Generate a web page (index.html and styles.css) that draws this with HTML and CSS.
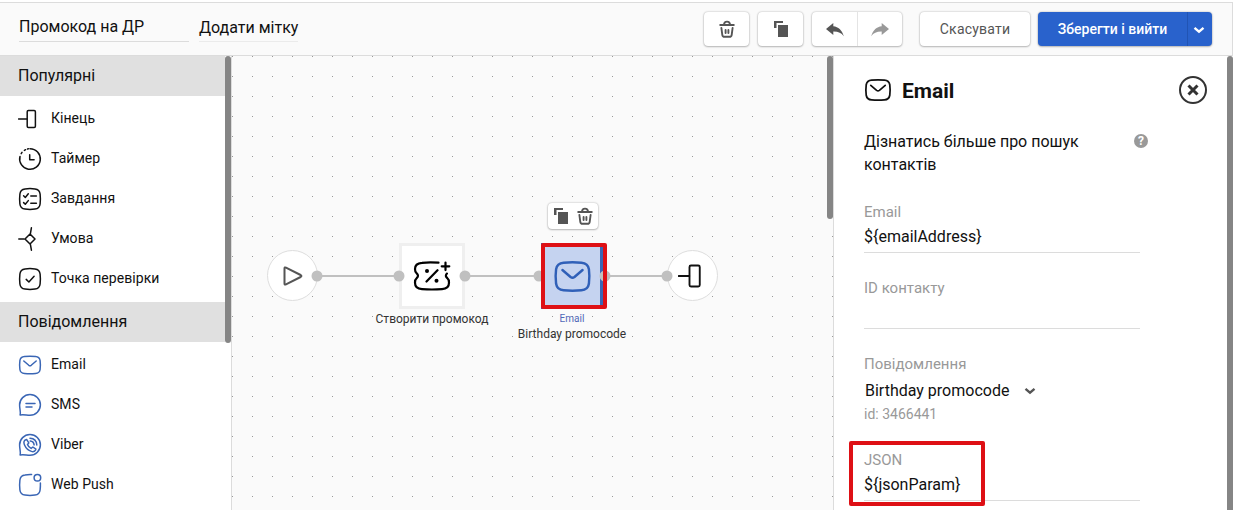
FILE: index.html
```html
<!DOCTYPE html>
<html lang="uk">
<head>
    <meta charset="UTF-8">
    <meta name="viewport" content="width=device-width, initial-scale=1.0">
    <title>Промокод на ДР</title>
    <link rel="stylesheet" href="styles.css">
</head>
<body>

<!-- Icons -->
<svg class="sprite">
    <symbol id="i-end" viewBox="0 0 24 24"><path d="M0.5 12H9"/><rect x="9.2" y="3.6" width="8.2" height="16.8" rx="1.2"/></symbol>
    <symbol id="i-timer" viewBox="0 0 24 24"><path d="M12 1.7a10.3 10.3 0 1 1-10 7.8"/><path d="M3.2 6.6l.8-1.2M6.4 3.4l1.2-.7M9.6 2l.8-.2"/><path d="M11.700 7.800v4.900h4.400"/></symbol>
    <symbol id="i-task" viewBox="0 0 24 24"><path d="M7 1.900q5-.6 10 0 4.600.5 5.100 5.100.6 5 0 10-.5 4.600-5.100 5.100-5 .6-10 0-4.600-.5-5.100-5.100-.6-5 0-10 .5-4.600 5.100-5.100z"/><path d="M5.600 8.800l1.700 1.700 3-3.700M12.800 9H18.400M5.600 15.600l1.700 1.700 3-3.700M12.800 16.200h5.600"/></symbol>
    <symbol id="i-cond" viewBox="0 0 24 24"><path d="M12 7l5 5-5 5-5-5zM.8 12H6M12.400 6.600l1-5.800M12.400 17.400l1 5.800"/></symbol>
    <symbol id="i-check" viewBox="0 0 24 24"><path d="M7 1.900q5-.6 10 0 4.600.5 5.100 5.100.6 5 0 10-.5 4.600-5.100 5.100-5 .6-10 0-4.600-.5-5.100-5.100-.6-5 0-10 .5-4.600 5.100-5.100z"/><path d="M8.200 12.400l2.700 2.600 5.200-5.800"/></symbol>
    <symbol id="i-mail" viewBox="0 0 24 20"><path d="M6.500 1.500q5.500-.5 11 0 4 .3 4.600 4 .6 4.500 0 9-.6 3.700-4.600 4-5.500.5-11 0-4-.3-4.600-4-.6-4.500 0-9 .6-3.700 4.600-4z"/><path d="M5.800 6l5 4.300q1.200.9 2.400 0l5-4.300"/></symbol>
    <symbol id="i-sms" viewBox="0 0 24 24"><path d="M1.600 12A10.400 10.400 0 1 1 12 22.300c-3.800 0-5.500-.8-9.900-.3.900-2.600-.5-5.600-.5-10z"/><path d="M8 10.400h9M8 14h6"/></symbol>
    <symbol id="i-viber" viewBox="0 0 24 24"><path d="M1.600 12A10.400 10.400 0 1 1 12 22.300c-3.800 0-5.500-.8-9.900-.3.900-2.600-.5-5.600-.5-10z"/><path d="M8.600 6.400c-2.600.6-3.300 2.700-2.200 5.300 1.400 3.300 3.800 5.700 7 6.700 2.300.7 4.100-.3 4.500-2.300l-3-2.100-1.800 1.400c-1.800-.9-3-2.300-3.600-4l1.300-1.500z"/><path d="M12 5.200c4 .2 6.600 2.900 6.800 6.800M12.200 8c2.400.2 3.700 1.600 3.900 3.900"/></symbol>
    <symbol id="i-push" viewBox="0 0 24 24"><path d="M13.600 1.600Q10 1.500 7 1.900q-4.600.5-5.100 5.100-.6 5 0 10 .5 4.600 5.100 5.100 5 .6 10 0 4.600-.5 5.100-5.100.4-3.500.3-7"/><circle cx="19.400" cy="4.700" r="3.300"/></symbol>
    <symbol id="i-promo" viewBox="0 0 38 30"><path d="M25.500 1.700Q16 1.200 9 1.800 2 2.200 2 8c0 2 .2 3.200 1.500 4.200q3 2.600 0 5.200C2.200 18.400 2 19.700 2 21.700q0 6 7 6.400 10 .8 20 0 7-.4 7-6.400c0-2-.2-3.300-1.500-4.300q-2.900-2.400-.6-4.800M32.500 1.500v7.600M28.700 5.300h7.600M24.500 9.200L13.500 20.500"/><circle class="solid" cx="14" cy="10" r="2"/><circle class="solid" cx="23.500" cy="19.800" r="2"/></symbol>
    <symbol id="i-trash" viewBox="0 0 16 18"><path d="M1.200 5h13.600M5 4.600C5.200.6 10.800.6 11 4.600M2.400 8l.9 6.800q.3 2 2.200 2h5q1.900 0 2.200-2L13.600 8M6.600 10v3M9.400 10v3"/></symbol>
    <symbol id="i-copy" viewBox="0 0 14 16"><path class="solid" d="M0 0h9v2H2.500v5H0zM4 4h10v12H4z"/></symbol>
    <symbol id="i-undo" viewBox="0 0 18 14"><path class="solid" d="M0 6L7.300 0v3.300c5 .6 8.600 3.600 10.500 10-2.400-3.300-5.500-4.800-10.500-4.700V12z"/></symbol>
    <symbol id="i-down" viewBox="0 0 12 8"><path d="M1.500 1.800L6 5.600l4.500-3.800"/></symbol>
</svg>

<div class="editor">
    <header class="topbar">
        <div class="title">Промокод на ДР</div>
        <div class="tag">Додати мітку</div>
        <div class="tools">
            <button class="btn icon-btn"><svg class="trash"><use href="#i-trash"/></svg></button>
            <button class="btn icon-btn"><svg class="copy"><use href="#i-copy"/></svg></button>
            <div class="btn history">
                <button><svg class="undo"><use href="#i-undo"/></svg></button>
                <button class="disabled"><svg class="undo redo"><use href="#i-undo"/></svg></button>
            </div>
            <button class="btn cancel">Скасувати</button>
            <div class="btn save">
                <button class="save-main">Зберегти і вийти</button>
                <button class="save-more"><svg class="down"><use href="#i-down"/></svg></button>
            </div>
        </div>
    </header>

    <div class="main">
        <aside class="sidebar">
            <div class="blocks">
                <h2>Популярні</h2>
                <ul>
                    <li><svg><use href="#i-end"/></svg>Кінець</li>
                    <li><svg><use href="#i-timer"/></svg>Таймер</li>
                    <li><svg><use href="#i-task"/></svg>Завдання</li>
                    <li><svg><use href="#i-cond"/></svg>Умова</li>
                    <li><svg><use href="#i-check"/></svg>Точка перевірки</li>
                </ul>
                <h2>Повідомлення</h2>
                <ul class="messages">
                    <li><svg><use href="#i-mail"/></svg>Email</li>
                    <li><svg><use href="#i-sms"/></svg>SMS</li>
                    <li><svg><use href="#i-viber"/></svg>Viber</li>
                    <li><svg><use href="#i-push"/></svg>Web Push</li>
                </ul>
            </div>
            <div class="scroll scroll-side"></div>
        </aside>

        <section class="canvas">
            <svg class="links">
                <path d="M85 220H167M233 220H307M373 220H435"/>
            </svg>
            <div class="node circle start">
                <svg viewBox="0 0 20 20"><path d="M1.500 2.500q0-1.600 1.500-.9L17.600 9q1.600 1 0 2L3 18.400q-1.500.7-1.500-.9z"/></svg>
            </div>
            <div class="node square promo"><svg><use href="#i-promo"/></svg></div>
            <div class="node square email"><svg><use href="#i-mail"/></svg></div>
            <div class="node circle end"><svg><use href="#i-end"/></svg></div>
            <svg class="links ports">
                <circle cx="85" cy="220" r="5.500"/>
                <circle cx="167" cy="220" r="5.500"/>
                <circle cx="233" cy="220" r="5.500"/>
                <circle cx="307" cy="220" r="5.500"/>
                <circle cx="373" cy="220" r="5.500"/>
                <circle cx="435" cy="220" r="5.500"/>
            </svg>
            <div class="mark mark-node"></div>
            <div class="caption promo-caption">Створити промокод</div>
            <div class="caption email-caption"><small>Email</small>Birthday promocode</div>
            <div class="node-tools">
                <svg class="copy"><use href="#i-copy"/></svg>
                <svg class="trash"><use href="#i-trash"/></svg>
            </div>
            <div class="scroll scroll-canvas"></div>
        </section>

        <aside class="panel">
            <div class="settings">
                <div class="panel-head">
                    <svg class="panel-icon"><use href="#i-mail"/></svg>
                    <h1>Email</h1>
                    <svg class="close" viewBox="0 0 28 28"><circle cx="14" cy="14" r="13"/><path d="M9.500 9.500l9 9M18.500 9.500l-9 9"/></svg>
                </div>
                <div class="help">
                    <p>Дізнатись більше про пошук контактів</p>
                    <span class="hint">?</span>
                </div>
                <div class="field">
                    <label>Email</label>
                    <div class="value">${emailAddress}</div>
                </div>
                <div class="field">
                    <label>ID контакту</label>
                    <div class="value"></div>
                </div>
                <div class="message">
                    <label>Повідомлення</label>
                    <div class="select">Birthday promocode <svg class="down"><use href="#i-down"/></svg></div>
                    <div class="id">id: 3466441</div>
                </div>
                <div class="field json">
                    <label>JSON</label>
                    <div class="value">${jsonParam}</div>
                    <div class="mark mark-json"></div>
                </div>
            </div>
            <div class="scroll scroll-panel"></div>
        </aside>
    </div>
</div>

</body>
</html>
```
FILE: styles.css
```css
* {
    box-sizing: border-box;
}

body {
    margin: 0;
    font-family: Roboto, sans-serif;
    color: #111;
    background: #fff;
}

h1, h2, p, ul {
    margin: 0;
    padding: 0;
    font-weight: 400;
}

button {
    font-family: inherit;
    border: none;
    padding: 0;
    background: none;
}

svg {
    fill: none;
    stroke: currentColor;
    stroke-width: 1.5;
    stroke-linecap: round;
    stroke-linejoin: round;
    flex: none;
}

.solid {
    fill: currentColor;
    stroke: none;
}

.sprite {
    display: none;
}

.editor {
    height: 510px;
    padding-top: 2px;
    display: flex;
    flex-direction: column;
    overflow: hidden;
}

/* top bar */
.topbar {
    height: 54px;
    flex: none;
    display: flex;
    align-items: flex-start;
    padding-left: 19px;
    background: #fafafa;
    border: 1px solid #dcdcdc;
    border-left: none;
    font-size: 16px;
}

.title {
    width: 170px;
    height: 39px;
    padding-top: 14px;
    line-height: 20px;
    border-bottom: 1px solid #dcdcdc;
}

.tag {
    height: 39px;
    padding-top: 15px;
    margin-left: 10px;
    line-height: 20px;
    border-bottom: 1px solid #ebebeb;
}

.tools {
    display: flex;
    margin-left: auto;
    padding: 9px 20px 0 0;
}

.btn {
    height: 34px;
    border-radius: 4px;
    background: #fff;
    box-shadow: 0 0 2px rgba(0, 0, 0, 0.3), 0 1px 2px rgba(0, 0, 0, 0.2);
    color: #555;
}

.icon-btn {
    width: 45px;
    margin-right: 9px;
    display: flex;
    align-items: center;
    justify-content: center;
}

.trash {
    width: 16px;
    height: 18px;
    stroke-width: 1.9;
}

.copy {
    width: 14px;
    height: 16px;
}

.history {
    display: flex;
    width: 90px;
    margin-right: 18px;
}

.history button {
    width: 45px;
    color: #555;
}

.history .disabled {
    color: #999;
    border-left: 1px solid #e4e4e4;
}

.undo {
    width: 18px;
    height: 14px;
    vertical-align: middle;
}

.redo {
    transform: scaleX(-1);
}

.cancel {
    width: 110px;
    margin-right: 8px;
    font-size: 14px;
    letter-spacing: 0.2px;
}

.save {
    display: flex;
    width: 174px;
    background: #2962cc;
}

.save button {
    color: #fff;
    font-size: 14px;
    font-weight: 500;
}

.save-main {
    width: 149px;
}

.save .save-more {
    width: 25px;
    border-left: 1px solid #2154b4;
}

.down {
    width: 12px;
    height: 8px;
    stroke-width: 2.4;
    stroke-linecap: butt;
    stroke-linejoin: miter;
}

.save .down {
    margin-right: 3px;
    vertical-align: middle;
}

.main {
    flex: 1;
    display: flex;
    min-height: 0;
}

.scroll {
    width: 6px;
    border-radius: 3px;
    background: #858585;
}

/* block list */
.sidebar {
    width: 232px;
    flex: none;
    display: flex;
    border-right: 1px solid #dcdcdc;
}

.blocks {
    flex: 1;
}

.blocks h2 {
    height: 40px;
    padding-left: 18px;
    font-size: 16px;
    line-height: 39px;
    background: #e0e0e0;
}

.blocks ul {
    list-style: none;
    padding: 2px 0 4px;
}

.blocks li {
    height: 40px;
    padding-left: 18px;
    display: flex;
    align-items: center;
    gap: 9px;
    font-size: 14px;
    letter-spacing: 0.05px;
}

.blocks li svg {
    width: 24px;
    height: 24px;
    margin-top: 1px;
}

.messages svg {
    color: #3a66b5;
}

.scroll-side {
    height: 287px;
}

/* workflow canvas */
.canvas {
    flex: 1;
    position: relative;
    background-color: #fafafa;
    background-image: radial-gradient(circle at 0.5px 0.5px, #999 0.7px, transparent 0.8px);
    background-size: 20px 20px;
}

.links {
    position: absolute;
    left: 0;
    top: 0;
    width: 100%;
    height: 100%;
    color: #c0c0c0;
    stroke-width: 2;
}

.ports {
    fill: #c0c0c0;
    stroke: none;
}

.node {
    position: absolute;
    display: flex;
    align-items: center;
    justify-content: center;
    background: #fff;
}

.circle {
    width: 51px;
    height: 51px;
    top: 194px;
    border: 1px solid #dedede;
    border-radius: 50%;
}

.start {
    left: 35px;
    color: #555;
}

.start svg {
    width: 20px;
    height: 20px;
    stroke-width: 2;
}

.end {
    left: 435px;
}

.end svg {
    width: 30px;
    height: 30px;
}

.square {
    width: 66px;
    height: 66px;
    top: 187px;
    border: 3px solid #efefef;
}

.promo {
    left: 167px;
    color: #000;
}

.promo svg {
    width: 38px;
    height: 30px;
    stroke-width: 2.2;
}

.email {
    left: 309px;
    width: 62px;
    background: #c5d3f0;
    border-color: #3a66b5;
    color: #3060b8;
}

.email svg {
    width: 39px;
    height: 33px;
    stroke-width: 1.5;
}

.mark {
    position: absolute;
    border: 4px solid #de1015;
    border-radius: 2px;
}

.mark-node {
    left: 309px;
    top: 187px;
    width: 66px;
    height: 66px;
}

.caption {
    position: absolute;
    width: 140px;
    text-align: center;
    font-size: 12px;
    line-height: 16px;
    color: #333;
}

.promo-caption {
    left: 130px;
    top: 255px;
}

.email-caption {
    left: 270px;
    top: 255px;
}

.email-caption small {
    display: block;
    font-size: 10px;
    line-height: 15px;
    color: #5068b8;
}

.node-tools {
    position: absolute;
    left: 316px;
    top: 147px;
    width: 50px;
    height: 26px;
    display: flex;
    align-items: center;
    justify-content: center;
    gap: 9px;
    border-radius: 4px;
    background: #fff;
    box-shadow: 0 0 2px rgba(0, 0, 0, 0.3), 0 1px 2px rgba(0, 0, 0, 0.2);
    color: #555;
}

.scroll-canvas {
    height: 163px;
    margin-left: auto;
}

/* settings panel */
.panel {
    width: 400px;
    flex: none;
    display: flex;
    border-left: 1px solid #dcdcdc;
}

.settings {
    flex: 1;
    padding: 20px 20px 0 30px;
    font-size: 16px;
}

.panel-head {
    height: 28px;
    display: flex;
    align-items: center;
}

.panel-icon {
    width: 28px;
    height: 24px;
}

.panel-head h1 {
    margin-left: 10px;
    font-size: 21px;
    font-weight: 700;
    line-height: 28px;
    padding-top: 1px;
}

.close {
    width: 28px;
    height: 28px;
    margin-left: auto;
    stroke-width: 2;
    color: #333;
}

.close path {
    stroke-width: 3;
    stroke-linecap: butt;
}

.help {
    display: flex;
    margin: 26px 0 24px;
    line-height: 23px;
}

.help p {
    width: 270px;
    padding-right: 40px;
}

.hint {
    width: 14px;
    height: 14px;
    margin-top: 4px;
    border-radius: 50%;
    background: #999;
    color: #fff;
    font-size: 12px;
    font-weight: 700;
    line-height: 14px;
    text-align: center;
}

.field {
    width: 276px;
    margin-bottom: 23px;
    border-bottom: 1px solid #dcdcdc;
    padding-bottom: 3px;
}

.settings label {
    display: block;
    line-height: 24px;
    font-size: 15px;
    color: #999;
}

.value {
    height: 25px;
    line-height: 25px;
}

.message {
    margin-bottom: 23px;
}

.select {
    padding: 2px 0 0 1px;
    line-height: 25px;
}

.select .down {
    margin: 0 0 2px 11px;
    color: #555;
    vertical-align: middle;
}

.id {
    font-size: 14px;
    line-height: 22px;
    color: #999;
}

.json {
    position: relative;
}

.mark-json {
    left: -15px;
    top: -7px;
    width: 136px;
    height: 65px;
}

.scroll-panel {
    height: 100%;
    border-radius: 3px 3px 0 0;
}
```
